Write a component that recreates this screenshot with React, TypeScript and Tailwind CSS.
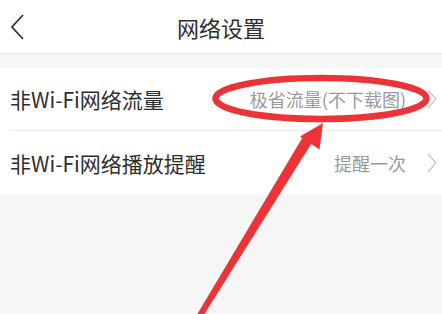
import React from "react";

const font = { fontFamily: '"Noto Sans CJK SC", "Noto Sans", sans-serif' };

function Chevron() {
  return (
    <svg width="10" height="20" viewBox="0 0 10 20" className="shrink-0">
      <path d="M1 1 L9 10 L1 19" fill="none" stroke="#c9c9c9" strokeWidth="1.3" />
    </svg>
  );
}

function Row({ label, value, h }: { label: string; value: string; h: string }) {
  return (
    <div className={`flex items-center justify-between bg-white pl-[10px] pr-[5px] ${h}`}>
      <span className="text-[21px] text-[#2e2e2e] leading-none">{label}</span>
      <div className="flex items-center gap-[21px]">
        <span className="text-[18px] text-[#9a9a9a] leading-none">{value}</span>
        <Chevron />
      </div>
    </div>
  );
}

export default function App() {
  return (
    <div className="relative w-[442px] h-[314px] overflow-hidden bg-[#f6f6f6]" style={font}>
      <div className="relative flex items-center justify-center h-[54px] bg-white border-b border-[#ebebeb]">
        <svg width="16" height="26" viewBox="0 0 16 26" className="absolute left-[10px] top-[14px]">
          <path d="M13 1 L2 13 L13 25" fill="none" stroke="#333" strokeWidth="1.8" />
        </svg>
        <span className="text-[22px] text-[#2e2e2e] leading-none">网络设置</span>
      </div>
      <div className="h-[14px]" />
      <div className="bg-white">
        <Row label="非Wi-Fi网络流量" value="极省流量(不下载图)" h="h-[62px]" />
        <div className="ml-[10px] h-px bg-[#ececec]" />
        <Row label="非Wi-Fi网络播放提醒" value="提醒一次" h="h-[64px]" />
      </div>
      <svg className="absolute inset-0 pointer-events-none" width="442" height="314" viewBox="0 0 442 314">
        <ellipse cx="321" cy="98.5" rx="105.5" ry="20.5" fill="none" stroke="#ec3338" strokeWidth="6.5" />
        <polygon points="195,318 202,318 313,141 304,135" fill="#ec3338" />
        <polygon points="323,123 300,136.5 319.5,149.5" fill="#ec3338" />
      </svg>
    </div>
  );
}
